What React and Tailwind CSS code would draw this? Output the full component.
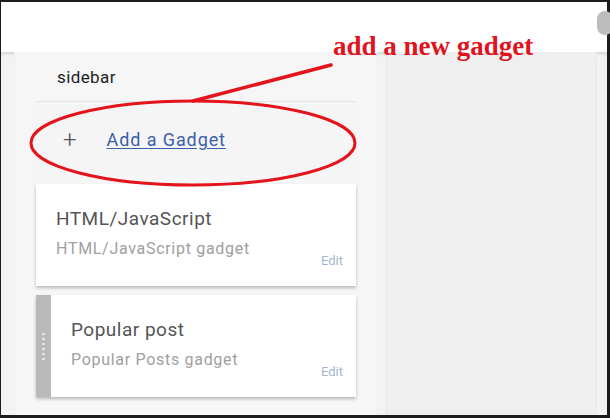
import React from "react";

const GadgetCard = ({ title, subtitle, handle }) => (
  <div className="flex bg-white shadow-[0_2px_3px_rgba(0,0,0,0.25)] h-[102px]">
    {handle && (
      <div className="w-[15px] bg-[#b9b9b9] flex flex-col items-center justify-center gap-[3px]">
        {[0, 1, 2, 3, 4, 5].map((i) => (
          <span key={i} className="block w-[3px] h-[2px] bg-[#e4e4e4]" />
        ))}
      </div>
    )}
    <div className="flex-1 relative pl-[20px] pt-[23px]">
      <div className="text-[19px] leading-[24px] tracking-[0.5px] text-[#555]">{title}</div>
      <div className="mt-[8px] text-[16px] leading-[20px] tracking-[0.7px] text-[#a0a0a0]">{subtitle}</div>
      <span className="absolute right-[13px] bottom-[16px] text-[13px] text-[#a6b6d0]">Edit</span>
    </div>
  </div>
);

export default function App() {
  return (
    <div
      className="w-[610px] h-[418px] bg-[#1c1c1c] pt-[2px] pl-[1px] pr-[3px] pb-[3px] overflow-hidden"
      style={{ fontFamily: "Roboto, 'Noto Sans', sans-serif" }}
    >
      <div className="relative w-full h-full bg-white flex flex-col">
        <div className="h-[50px] bg-white shrink-0" />
        <div className="absolute right-[-6px] top-[9px] w-[16px] h-[24px] rounded-full bg-[#bdbdbd]" />
        <div className="flex-1 flex bg-[#f3f3f3] shadow-[inset_0_3px_3px_-1px_rgba(0,0,0,0.12)] pl-[13px] pr-[10px]">
          <div className="w-[364px] bg-[#f6f6f6] border-x border-[#ececec] pt-[14px] px-[21px]">
            <div className="pl-[21px] text-[17px] leading-[22px] tracking-[0.4px] text-[#1e1e1e]">sidebar</div>
            <div className="mt-[13px] h-[72px] border-t border-[#e6e6e6] bg-[#f5f5f5] flex items-center pl-[27px] pt-[4px]">
              <span className="text-[24px] font-light text-[#555] leading-none">+</span>
              <span className="ml-[30px] text-[18px] tracking-[0.9px] text-[#3d5ea9] underline underline-offset-2">
                Add a Gadget
              </span>
            </div>
            <div className="mt-[11px] flex flex-col gap-[9px]">
              <GadgetCard title="HTML/JavaScript" subtitle="HTML/JavaScript gadget" />
              <GadgetCard title="Popular post" subtitle="Popular Posts gadget" handle />
            </div>
          </div>
          <div className="ml-[8px] flex-1 bg-[#efefef] border-x border-[#e8e8e8]" />
        </div>

        <svg className="absolute inset-0 pointer-events-none" width="606" height="413" viewBox="0 0 606 413">
          <ellipse cx="192" cy="141" rx="162" ry="42" fill="none" stroke="#e3141c" strokeWidth="3" />
          <line x1="330" y1="63" x2="192" y2="99" stroke="#e3141c" strokeWidth="3.5" strokeLinecap="round" />
        </svg>
        <div
          className="absolute left-[332px] top-[31px] text-[27px] font-bold text-[#e0141e] leading-none"
          style={{ fontFamily: "'Liberation Serif', serif" }}
        >
          add a new gadget
        </div>
      </div>
    </div>
  );
}
